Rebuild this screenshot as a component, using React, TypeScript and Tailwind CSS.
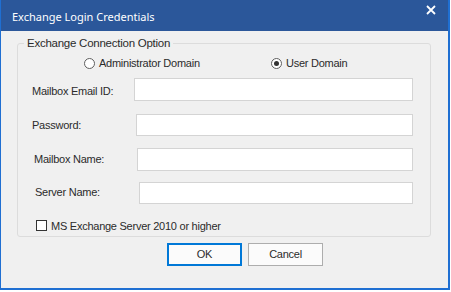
import React from "react";

const body = { fontFamily: '"Liberation Sans", Arial, sans-serif', letterSpacing: "-0.25px" };
const titleFont = { fontFamily: '"Noto Sans", "Open Sans", sans-serif', letterSpacing: "0px" };

function Radio({ checked, label }: { checked?: boolean; label: string }) {
  return (
    <label className="flex items-center gap-[4px]">
      <span className="flex h-[11px] w-[11px] items-center justify-center rounded-full border border-[#5f5f5f] bg-white">
        {checked && <span className="h-[5px] w-[5px] rounded-full bg-[#333]" />}
      </span>
      <span>{label}</span>
    </label>
  );
}

export default function App() {
  return (
    <div className="h-[292px] w-[451px] overflow-hidden bg-white text-[11px] text-[#2b2b2b]" style={body}>
      <div className="flex h-[290px] w-[450px] flex-col border-b-2 border-l border-r-2 border-[#1f6fd2] bg-[#f0f0f0]">
        <div className="flex h-[31px] shrink-0 items-center justify-between bg-[#2b579a] pl-[11px] pr-[12px] text-white">
          <span className="pt-[3px] text-[11px]" style={titleFont}>Exchange Login Credentials</span>
          <svg width="10" height="10" viewBox="0 0 10 10" className="mb-[11px]">
            <path d="M1 1 L9 9 M9 1 L1 9" stroke="white" strokeWidth="1.8" />
          </svg>
        </div>
        <div className="relative ml-[16px] mt-[12px] h-[194px] w-[414px] rounded-[3px] border border-[#dcdcdc]">
          <span className="absolute -top-[9px] left-[6px] bg-[#f0f0f0] px-[3px] text-[11.5px]">Exchange Connection Option</span>
          <div className="flex pl-[66px] pt-[11px]">
            <div className="w-[187px]"><Radio label="Administrator Domain" /></div>
            <Radio checked label="User Domain" />
          </div>
          <div className="pr-[17px] pt-[6px]">
            <div className="flex items-center">
              <div className="w-[116px] pl-[14px] pt-[4px]">Mailbox Email ID:</div>
              <div className="h-[23px] flex-1 border border-[#d4d4d4] bg-white" />
            </div>
            <div className="mt-[13px] flex items-center">
              <div className="w-[118px] pl-[14px] pt-[1px]">Password:</div>
              <div className="h-[22px] flex-1 border border-[#d4d4d4] bg-white" />
            </div>
            <div className="mt-[12px] flex items-center">
              <div className="w-[119px] pl-[16px]">Mailbox Name:</div>
              <div className="h-[23px] flex-1 border border-[#d4d4d4] bg-white" />
            </div>
            <div className="mt-[11px] flex items-center">
              <div className="w-[121px] pl-[17px]">Server Name:</div>
              <div className="h-[22px] flex-1 border border-[#d4d4d4] bg-white" />
            </div>
          </div>
          <div className="mt-[14px] flex items-center gap-[4px] pl-[18px]">
            <span className="h-[11px] w-[11px] border border-[#333] bg-white" />
            <span>MS Exchange Server 2010 or higher</span>
          </div>
        </div>
        <div className="mt-[6px] flex gap-[6px] pl-[166px]">
          <button className="flex h-[23px] w-[75px] items-center justify-center border border-[#0078d7] bg-[#fbfbfb] text-[#2b2b2b] outline outline-1 -outline-offset-2 outline-[#0078d7]">
            OK
          </button>
          <button className="flex h-[23px] w-[75px] items-center justify-center border border-[#adadad] bg-[#fbfbfb] text-[#2b2b2b]">
            Cancel
          </button>
        </div>
      </div>
    </div>
  );
}
